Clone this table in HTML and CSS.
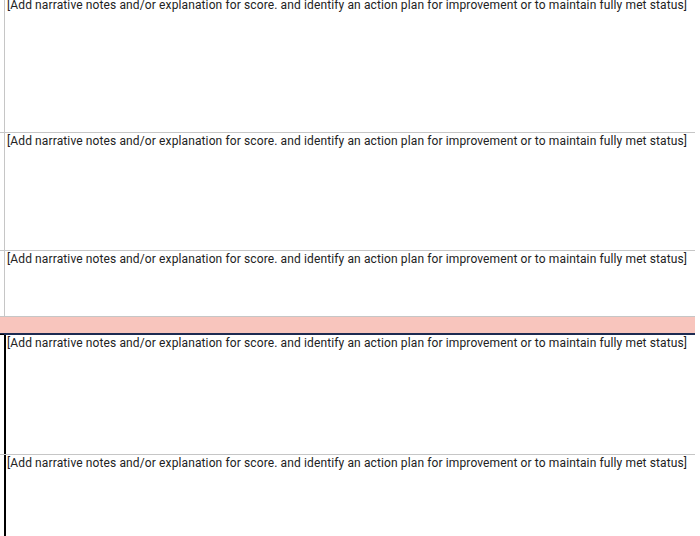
FILE: index.html
```html
<!DOCTYPE html>
<html lang="en">
<head>
  <meta charset="UTF-8" />
  <title>Narrative notes</title>
  <link rel="stylesheet" href="styles.css">
</head>
<body>
  <div class="sheet">
    <div class="row row-first">
      <div class="gutter"></div>
      <div class="cell">[Add narrative notes and/or explanation for score. and identify an action plan for improvement or to maintain fully met status]</div>
    </div>
    <div class="row row-tall">
      <div class="gutter"></div>
      <div class="cell">[Add narrative notes and/or explanation for score. and identify an action plan for improvement or to maintain fully met status]</div>
    </div>
    <div class="row row-short">
      <div class="gutter"></div>
      <div class="cell">[Add narrative notes and/or explanation for score. and identify an action plan for improvement or to maintain fully met status]</div>
    </div>

    <!-- section divider -->
    <div class="row band"></div>

    <div class="row row-boxed row-tall2">
      <div class="gutter"></div>
      <div class="cell">[Add narrative notes and/or explanation for score. and identify an action plan for improvement or to maintain fully met status]</div>
    </div>
    <div class="row row-boxed row-last">
      <div class="gutter"></div>
      <div class="cell">[Add narrative notes and/or explanation for score. and identify an action plan for improvement or to maintain fully met status]</div>
    </div>
  </div>
</body>
</html>
```

FILE: styles.css
```css
:root {
  --grid: #c6c6c6;
  --text: #222;
  --band: #f8c5bd;
  --navy: #1d2b52;
}

* { margin: 0; padding: 0; box-sizing: border-box; }
html, body { height: 100%; overflow: hidden; }

body {
  font-family: Roboto, "Liberation Sans", sans-serif;
  font-size: 12px;
  color: var(--text);
  background: #fff;
}

.sheet {
  width: 695px;
  margin-top: -3px;
  display: flex;
  flex-direction: column;
}

.row {
  display: flex;
  border-bottom: 1px solid var(--grid);
}

.gutter { width: 4px; flex-shrink: 0; }

.cell {
  flex: 1;
  border-left: 1px solid var(--grid);
  padding: 1px 0 0 2px;
  line-height: 14px;
  letter-spacing: 0.12px;
  white-space: nowrap;
  overflow: hidden;
}

.row-first { height: 136px; }
.row-tall  { height: 118px; }
.row-short { height: 66px; }

.band {
  height: 17px;
  background: var(--band);
  border-bottom: 1px solid var(--navy);
}

.row-boxed { border-top: 1px solid var(--navy); }
.row-boxed .gutter { border-top: 1px solid #000; margin-top: -1px; }
.row-boxed .cell { border-left: 2px solid #000; padding-left: 1px; }
.row-boxed + .row-boxed { border-top: none; }
.row-boxed + .row-boxed .gutter { border-top: none; margin-top: 0; }

.row-tall2 { height: 121px; }
.row-last  { height: 81px; border-bottom: none; }
```
